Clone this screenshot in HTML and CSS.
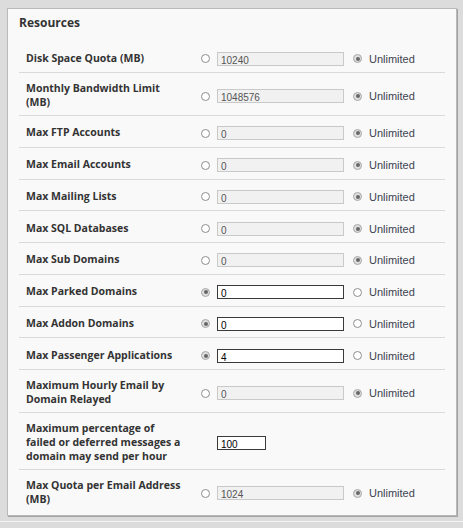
FILE: index.html
```html
<!DOCTYPE html>
<html>
<head>
<meta charset="utf-8">
<link rel="stylesheet" href="styles.css">
</head>
<body>
<div class="panel">
  <h2 class="title">Resources</h2>
  <div class="rows">
    <div class="row">
      <div class="label">Disk Space Quota (MB)</div>
      <div class="controls"><span class="radio"></span><span class="field disabled">10240</span><span class="radio on"></span><span class="unl">Unlimited</span></div>
    </div>
    <div class="row">
      <div class="label">Monthly Bandwidth Limit (MB)</div>
      <div class="controls"><span class="radio"></span><span class="field disabled">1048576</span><span class="radio on"></span><span class="unl">Unlimited</span></div>
    </div>
    <div class="row">
      <div class="label">Max FTP Accounts</div>
      <div class="controls"><span class="radio"></span><span class="field disabled">0</span><span class="radio on"></span><span class="unl">Unlimited</span></div>
    </div>
    <div class="row">
      <div class="label">Max Email Accounts</div>
      <div class="controls"><span class="radio"></span><span class="field disabled">0</span><span class="radio on"></span><span class="unl">Unlimited</span></div>
    </div>
    <div class="row">
      <div class="label">Max Mailing Lists</div>
      <div class="controls"><span class="radio"></span><span class="field disabled">0</span><span class="radio on"></span><span class="unl">Unlimited</span></div>
    </div>
    <div class="row">
      <div class="label">Max SQL Databases</div>
      <div class="controls"><span class="radio"></span><span class="field disabled">0</span><span class="radio on"></span><span class="unl">Unlimited</span></div>
    </div>
    <div class="row">
      <div class="label">Max Sub Domains</div>
      <div class="controls"><span class="radio"></span><span class="field disabled">0</span><span class="radio on"></span><span class="unl">Unlimited</span></div>
    </div>
    <div class="row">
      <div class="label">Max Parked Domains</div>
      <div class="controls"><span class="radio on"></span><span class="field">0</span><span class="radio"></span><span class="unl">Unlimited</span></div>
    </div>
    <div class="row">
      <div class="label">Max Addon Domains</div>
      <div class="controls"><span class="radio on"></span><span class="field">0</span><span class="radio"></span><span class="unl">Unlimited</span></div>
    </div>
    <div class="row">
      <div class="label">Max Passenger Applications</div>
      <div class="controls"><span class="radio on"></span><span class="field">4</span><span class="radio"></span><span class="unl">Unlimited</span></div>
    </div>
    <div class="row">
      <div class="label">Maximum Hourly Email by Domain Relayed</div>
      <div class="controls"><span class="radio"></span><span class="field disabled">0</span><span class="radio on"></span><span class="unl">Unlimited</span></div>
    </div>
    <div class="row">
      <div class="label">Maximum percentage of failed or deferred messages a domain may send per hour</div>
      <div class="controls"><span class="spacer"></span><span class="field small">100</span></div>
    </div>
    <div class="row last">
      <div class="label">Max Quota per Email Address (MB)</div>
      <div class="controls"><span class="radio"></span><span class="field disabled">1024</span><span class="radio on"></span><span class="unl">Unlimited</span></div>
    </div>
  </div>
</div>
<div class="footer"></div>
</body>
</html>
```

FILE: styles.css
```css
html, body {
  margin: 0;
  padding: 0;
  background: #dcdcdc;
}

body {
  padding-top: 8px;
  font-family: "Open Sans", "Liberation Sans", sans-serif;
  color: #333;
}

.panel {
  margin: 0 6px 0 7px;
  background: #f9f9f9;
  border: 1px solid #b9b9b9;
  box-shadow: 1px 1px 0 #a3a3a3;
  padding: 6px 11px 3px 11px;
}

.title {
  margin: 0 0 10.25px 0;
  font-size: 12px;
  line-height: 16px;
  font-weight: 700;
  color: #333;
}

.row {
  display: flex;
  align-items: center;
  padding: 8px 0 6px 7px;
  border-bottom: 1px solid #d9d9d9;
}

.row.last {
  border-bottom: none;
}

.label {
  flex: 0 0 158px;
  font-size: 10.5px;
  line-height: 14px;
  font-weight: 700;
  color: #333;
}

.controls {
  flex: 1;
  display: flex;
  align-items: center;
  height: 16.75px;
  padding-left: 17px;
  padding-top: 2px;
  box-sizing: border-box;
}

.radio {
  width: 9px;
  height: 9px;
  border-radius: 50%;
  border: 1px solid #8e8e8e;
  background: #fff;
  box-sizing: border-box;
  position: relative;
  flex: 0 0 auto;
}

.radio.on {
  border-color: #a8a8a8;
  background: #dedede;
}

.radio.on::after {
  content: "";
  position: absolute;
  left: 1.5px;
  top: 1.5px;
  width: 4px;
  height: 4px;
  border-radius: 50%;
  background: #676767;
}

.spacer {
  width: 9px;
  flex: 0 0 auto;
}

.field {
  margin-left: 7px;
  width: 127px;
  height: 14px;
  box-sizing: border-box;
  border: 1px solid #3a3a3a;
  background: #fff;
  font-family: "Liberation Sans", Arial, sans-serif;
  font-size: 10px;
  line-height: 13px;
  padding-left: 3px;
  padding-top: 1px;
  color: #000;
}

.field.disabled {
  border-color: #c9c9c9;
  background: #f1f1f1;
  color: #555;
}

.field.small {
  width: 49px;
}

.field + .radio {
  margin-left: 9px;
}

.unl {
  margin-left: 7px;
  font-family: "Liberation Sans", Arial, sans-serif;
  font-size: 11px;
  color: #3c4350;
}

.footer {
  margin-top: 5px;
  border-top: 1px solid #f3f3f3;
  height: 10px;
}
```
